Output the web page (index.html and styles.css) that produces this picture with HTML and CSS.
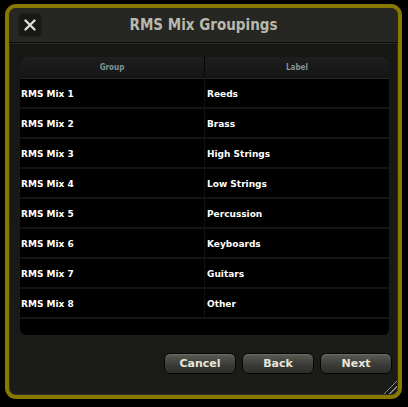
FILE: index.html
```html
<!DOCTYPE html>
<html>
<head>
<meta charset="utf-8">
<link rel="stylesheet" href="styles.css">
</head>
<body>
<div class="window">
  <div class="header">
    <button class="close" aria-label="Close">
      <svg width="12" height="12" viewBox="0 0 12 12"><path d="M1.5 1.5 L10.5 10.5 M10.5 1.5 L1.5 10.5" stroke="#dcdcd2" stroke-width="2.4" stroke-linecap="round"/></svg>
    </button>
    <div class="title">RMS Mix Groupings</div>
  </div>
  <div class="content">
    <div class="table">
      <div class="thead">
        <div class="th">Group</div>
        <div class="th">Label</div>
      </div>
      <div class="row"><div class="cell">RMS Mix 1</div><div class="cell">Reeds</div></div>
      <div class="row"><div class="cell">RMS Mix 2</div><div class="cell">Brass</div></div>
      <div class="row"><div class="cell">RMS Mix 3</div><div class="cell">High Strings</div></div>
      <div class="row"><div class="cell">RMS Mix 4</div><div class="cell">Low Strings</div></div>
      <div class="row"><div class="cell">RMS Mix 5</div><div class="cell">Percussion</div></div>
      <div class="row"><div class="cell">RMS Mix 6</div><div class="cell">Keyboards</div></div>
      <div class="row"><div class="cell">RMS Mix 7</div><div class="cell">Guitars</div></div>
      <div class="row"><div class="cell">RMS Mix 8</div><div class="cell">Other</div></div>
      <div class="filler"></div>
    </div>
    <div class="buttons">
      <button class="btn">Cancel</button>
      <button class="btn">Back</button>
      <button class="btn">Next</button>
    </div>
  </div>
  <div class="grip"></div>
</div>
</body>
</html>
```

FILE: styles.css
```css
html, body {
  margin: 0;
  padding: 0;
  background: #000;
}
body {
  padding: 4px 0 0 5px;
}
.window {
  position: relative;
  box-sizing: border-box;
  width: 397px;
  height: 395px;
  border: 4px solid #877800;
  border-radius: 11px;
  background: linear-gradient(#161614, #1b1b17);
  box-shadow: inset 0 0 0 1px #2c2c28;
  overflow: hidden;
  display: flex;
  flex-direction: column;
}
.header {
  position: relative;
  height: 35px;
  box-sizing: border-box;
  border-bottom: 1px solid #0d0d0c;
  background: #262622;
  display: flex;
  align-items: center;
  justify-content: center;
  border-radius: 7px 7px 0 0;
}
.close {
  position: absolute;
  left: 10px;
  top: 6px;
  width: 22px;
  height: 22px;
  padding: 0;
  border: none;
  border-radius: 4px;
  background: #181816;
  box-shadow: 0 0 0 1px #1f1f1c;
  display: flex;
  align-items: center;
  justify-content: center;
}
.title {
  font-family: "DejaVu Sans Condensed", "DejaVu Sans", sans-serif;
  font-weight: bold;
  font-size: 15px;
  color: #b9b9ad;
}
.content {
  flex: 1;
  display: flex;
  flex-direction: column;
  padding: 13px 9px 0 11px;
  border-top: 1px solid #2a2a26;
}
.table {
  background: #000;
  border-radius: 6px;
  overflow: hidden;
  font-family: "DejaVu Sans", sans-serif;
  font-weight: bold;
  font-size: 9px;
  color: #fff;
}
.thead {
  display: grid;
  grid-template-columns: 184px 1fr;
  height: 21px;
  background: linear-gradient(#1e1e1e, #151515);
  border-bottom: 1px solid #262626;
}
.th {
  display: flex;
  align-items: center;
  justify-content: center;
  font-family: "DejaVu Sans Condensed", "DejaVu Sans", sans-serif;
  font-size: 8px;
  font-weight: bold;
  color: #7f9494;
}
.th + .th {
  border-left: 1px solid #080808;
}
.row {
  display: grid;
  grid-template-columns: 184px 1fr;
  height: 28px;
  border-bottom: 2px solid #141414;
}
.cell {
  display: flex;
  align-items: center;
  padding-left: 1px;
  padding-top: 1px;
}
.cell + .cell {
  border-left: 1px solid #121212;
  padding-left: 2px;
}
.filler {
  height: 16px;
}
.buttons {
  display: flex;
  justify-content: flex-end;
  gap: 6px;
  padding-top: 18px;
  margin-right: -3px;
}
.btn {
  width: 72px;
  height: 21px;
  border: 1px solid #050505;
  border-radius: 6px;
  background: linear-gradient(#5c5c56, #3c3c38 55%, #2c2c29);
  box-shadow: inset 0 1px 0 #6a6a64;
  font-family: "DejaVu Sans", sans-serif;
  font-weight: bold;
  font-size: 11px;
  color: #e6e6da;
  padding: 0;
}
.grip {
  position: absolute;
  right: 1px;
  bottom: 1px;
  width: 14px;
  height: 14px;
  background: repeating-linear-gradient(135deg, transparent 0 2px, #8a8a84 2px 3px, transparent 3px 4px);
  clip-path: polygon(100% 0, 100% 100%, 0 100%);
}
```
